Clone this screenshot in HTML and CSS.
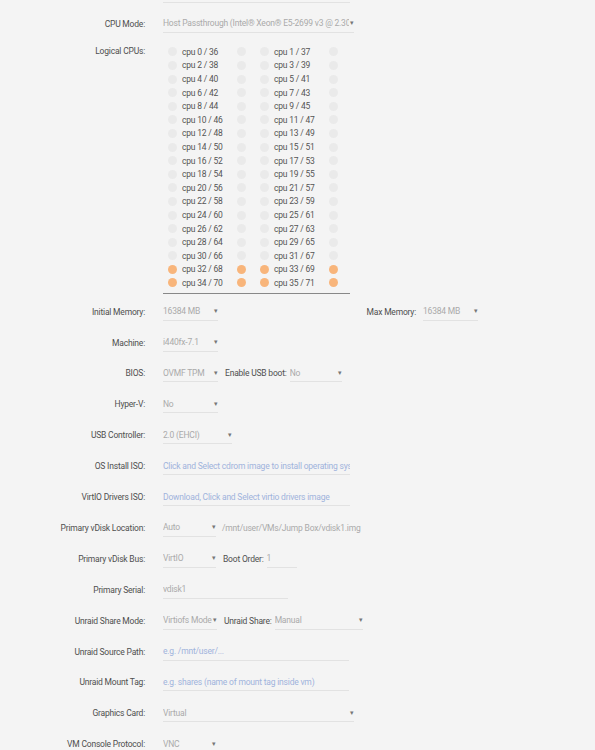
FILE: index.html
```html
<!DOCTYPE html>
<html>
<head>
    <meta charset="UTF-8" />
    <title>VM Settings</title>
    <link rel="stylesheet" href="styles.css">
</head>
<body>
    <div id="form">
        <div class="top-line"></div>

        <div class="row">
            <label>CPU Mode:</label>
            <div class="value">
                <span class="field w-cpu"><span class="txt">Host Passthrough (Intel&reg; Xeon&reg; E5-2699 v3 @ 2.30GHz)</span><i>&#9662;</i></span>
            </div>
        </div>

        <div class="row cpus">
            <label>Logical CPUs:</label>
            <div class="cpu-box" id="cpuBox"></div>
        </div>

        <div class="row">
            <label>Initial Memory:</label>
            <div class="value">
                <span class="field w55"><span class="txt">16384 MB</span><i>&#9662;</i></span>
                <span class="sub-label max">Max Memory:</span>
                <span class="field w55"><span class="txt">16384 MB</span><i>&#9662;</i></span>
            </div>
        </div>

        <div class="row">
            <label>Machine:</label>
            <div class="value">
                <span class="field w55"><span class="txt">i440fx-7.1</span><i>&#9662;</i></span>
            </div>
        </div>

        <div class="row">
            <label>BIOS:</label>
            <div class="value">
                <span class="field w55"><span class="txt">OVMF TPM</span><i>&#9662;</i></span>
                <span class="sub-label">Enable USB boot:</span>
                <span class="field w52"><span class="txt">No</span><i>&#9662;</i></span>
            </div>
        </div>

        <div class="row">
            <label>Hyper-V:</label>
            <div class="value">
                <span class="field w55"><span class="txt">No</span><i>&#9662;</i></span>
            </div>
        </div>

        <div class="row">
            <label>USB Controller:</label>
            <div class="value">
                <span class="field w69"><span class="txt">2.0 (EHCI)</span><i>&#9662;</i></span>
            </div>
        </div>

        <div class="row">
            <label>OS Install ISO:</label>
            <div class="value">
                <span class="field w187 ph"><span class="txt">Click and Select cdrom image to install operating system</span></span>
            </div>
        </div>

        <div class="row">
            <label>VirtIO Drivers ISO:</label>
            <div class="value">
                <span class="field w187 ph"><span class="txt">Download, Click and Select virtio drivers image</span></span>
            </div>
        </div>

        <div class="row">
            <label>Primary vDisk Location:</label>
            <div class="value">
                <span class="field w53"><span class="txt">Auto</span><i>&#9662;</i></span>
                <span class="path">/mnt/user/VMs/Jump Box/vdisk1.img</span>
            </div>
        </div>

        <div class="row">
            <label>Primary vDisk Bus:</label>
            <div class="value">
                <span class="field w53"><span class="txt">VirtIO</span><i>&#9662;</i></span>
                <span class="sub-label">Boot Order:</span>
                <span class="field w30"><span class="txt">1</span></span>
            </div>
        </div>

        <div class="row">
            <label>Primary Serial:</label>
            <div class="value">
                <span class="field w125"><span class="txt">vdisk1</span></span>
            </div>
        </div>

        <div class="row">
            <label>Unraid Share Mode:</label>
            <div class="value">
                <span class="field w54"><span class="txt">Virtiofs Mode</span><i>&#9662;</i></span>
                <span class="sub-label">Unraid Share:</span>
                <span class="field w88"><span class="txt">Manual</span><i>&#9662;</i></span>
            </div>
        </div>

        <div class="row">
            <label>Unraid Source Path:</label>
            <div class="value">
                <span class="field w186 ph"><span class="txt">e.g. /mnt/user/...</span></span>
            </div>
        </div>

        <div class="row">
            <label>Unraid Mount Tag:</label>
            <div class="value">
                <span class="field w186 ph"><span class="txt">e.g. shares (name of mount tag inside vm)</span></span>
            </div>
        </div>

        <div class="row">
            <label>Graphics Card:</label>
            <div class="value">
                <span class="field w191"><span class="txt">Virtual</span><i>&#9662;</i></span>
            </div>
        </div>

        <div class="row">
            <label>VM Console Protocol:</label>
            <div class="value">
                <span class="field w53"><span class="txt">VNC</span><i>&#9662;</i></span>
            </div>
        </div>
    </div>

    <script>
        (function(){
            let oBox = document.getElementById("cpuBox");
            let html = "";
            //36 cores, 32~35 are pinned
            for( let i = 0; i < 36; i++ ){
                let on = i >= 32 ? " on" : "";
                html += '<div class="cpu">' +
                    '<span class="dot' + on + '"></span>' +
                    '<span class="name">cpu ' + i + ' / ' + (i + 36) + '</span>' +
                    '<span class="dot' + on + '"></span>' +
                    '</div>';
            }
            oBox.innerHTML = html;
        })();
    </script>
</body>
</html>
```

FILE: styles.css
```css
*{ margin:0; padding:0; box-sizing:border-box;}
body{
    background: #f4f4f4;
    font-family: Roboto, "Open Sans", sans-serif;
    font-size: 8.5px;
    letter-spacing: -0.2px;
    color: #555;
}
#form{
    width: 595px;
    height: 750px;
    overflow: hidden;
}
.top-line{
    width: 187px;
    height: 3px;
    margin-left: 163px;
    border-bottom: 1px solid #e2e2e2;
}
.row{
    display: grid;
    grid-template-columns: 145px 1fr;
    column-gap: 18px;
    align-items: center;
    height: 30.9px;
}
.row:nth-child(2){
    margin-top: 5.5px;
}
.row label{
    text-align: right;
    color: #4f4f4f;
    white-space: nowrap;
}
.value{
    display: flex;
    align-items: center;
}
.field{
    display: flex;
    align-items: center;
    justify-content: space-between;
    height: 18px;
    border-bottom: 1px solid #e2e2e2;
    color: #aaa;
    overflow: hidden;
}
.field .txt{
    overflow: hidden;
    white-space: nowrap;
    flex: 1;
}
.field i{
    font-style: normal;
    font-size: 7px;
    color: #777;
    padding-left: 1px;
}
.field.ph{ color: #9fb3dc;}
.w30{ width: 30px;}
.w52{ width: 52px;}
.w53{ width: 53px;}
.w54{ width: 54px;}
.w55{ width: 55px;}
.w69{ width: 69px;}
.w88{ width: 88px;}
.w125{ width: 125px;}
.w186{ width: 186px;}
.w187{ width: 187px;}
.w191{ width: 191px;}
.w-cpu{ width: 191px;}
.sub-label{
    margin: 0 3px 0 7px;
    color: #4f4f4f;
    white-space: nowrap;
}
.sub-label.max{
    width: 198px;
    margin: 0 7px 0 0;
    text-align: right;
}
.path{
    margin-left: 6px;
    color: #aaa;
    white-space: nowrap;
}

/* logical cpus */
.row.cpus{
    height: auto;
    align-items: start;
    margin-top: 0;
    padding-top: 5.7px;
    margin-bottom: 2.5px;
}
.row.cpus label{
    line-height: 13.6px;
}
.cpu-box{
    display: grid;
    grid-template-columns: 92px 92px;
    width: 187px;
    padding: 0 0 3px 5px;
    border-bottom: 1px solid #888;
}
.cpu{
    display: flex;
    align-items: center;
    height: 13.6px;
}
.cpu .dot{
    width: 9px;
    height: 9px;
    border-radius: 50%;
    background: #eaeaea;
    flex: none;
}
.cpu .dot.on{
    background: #f8b57b;
}
.cpu .name{
    width: 60px;
    padding-left: 5px;
    color: #555;
    white-space: nowrap;
}
```
